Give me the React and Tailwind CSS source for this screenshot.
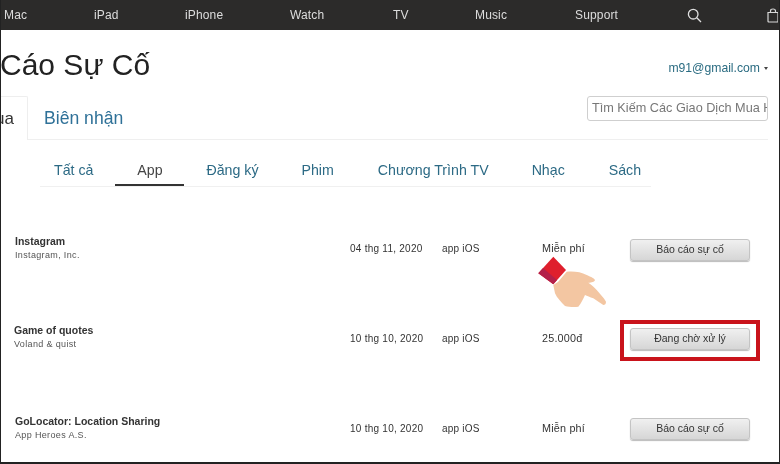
const font = { fontFamily: '"Liberation Sans", Arial, sans-serif' };

const navItems = [
  { label: "Mac", cls: "ml-[3px] w-[90px]" },
  { label: "iPad", cls: "w-[91px]" },
  { label: "iPhone", cls: "w-[105px]" },
  { label: "Watch", cls: "w-[103px]" },
  { label: "TV", cls: "w-[82px]" },
  { label: "Music", cls: "w-[100px]" },
  { label: "Support", cls: "w-[113px]" },
];

const subTabs = [
  { label: "Tất cả", cls: "pl-[14px] pr-[22px] text-[#2c6a85]" },
  { label: "App", cls: "w-[69px] text-center text-[#444] border-b-2 border-[#333]" },
  { label: "Đăng ký", cls: "pl-[22px] pr-[21px] text-[#2c6a85]" },
  { label: "Phim", cls: "px-[22px] text-[#2c6a85]" },
  { label: "Chương Trình TV", cls: "pl-[22px] pr-[21px] text-[#2c6a85]" },
  { label: "Nhạc", cls: "px-[22px] text-[#2c6a85]" },
  { label: "Sách", cls: "pl-[22px] text-[#2c6a85]" },
];

const rows = [
  { name: "Instagram", dev: "Instagram, Inc.", date: "04 thg 11, 2020", price: "Miễn phí", action: "Báo cáo sự cố", nameCls: "pl-[14px]", btnCls: "mt-[3px]" },
  { name: "Game of quotes", dev: "Voland & quist", date: "10 thg 10, 2020", price: "25.000đ", action: "Đang chờ xử lý", marked: true, nameCls: "pl-[13px] -mt-[3px]", btnCls: "mt-[1px]" },
  { name: "GoLocator: Location Sharing", dev: "App Heroes A.S.", date: "10 thg 10, 2020", price: "Miễn phí", action: "Báo cáo sự cố", nameCls: "pl-[14px]", btnCls: "mt-[1px]" },
];

const Hand = () => (
  <svg className="absolute left-[537px] top-[256px]" width="70" height="52" viewBox="0 0 70 52">
    <path d="M20 26 L28.7 15.7 C36 15 43 16 48.7 19 C52 20.5 56 22 57 24 C56.5 26 53 26.8 50.3 26.7 C54 29 56 31 58.7 34 C62 38 66 42 68 45.7 C68 48 67 49 65.3 49 C62 47 58 44 55.3 42.3 C52 41 49 40 47 39 C45 43 43 48 40.3 50.7 C36 51.5 31 51 27 50 C23 46 19 42 17 37.3 L15.3 29 Z" fill="#f3c6a2" />
    <path d="M0.3 17.3 L15.3 0.7 L28 14 L15.3 28.3 Z" fill="#df1f2d" />
    <path d="M0.3 17.3 L15.3 28.3 L19 24 L5 12 Z" fill="#b3204a" />
  </svg>
);

const App = () => {
  return (
    <div style={font} className="relative w-[780px] h-[464px] overflow-hidden bg-white border-l border-b-2 border-r border-[#222] blur-[0.4px]">
      <nav className="h-[30px] bg-[#2c2b2a] flex items-center text-[12px] text-[#dddddd] tracking-[0.15px]">
        {navItems.map((item) => (
          <span key={item.label} className={item.cls}>{item.label}</span>
        ))}
        <svg width="15" height="15" viewBox="0 0 15 15" fill="none" stroke="#e0e0e0" strokeWidth="1.3" className="-ml-[1px]">
          <circle cx="6.2" cy="6.2" r="4.8" />
          <path d="M9.8 9.8 L14 14" />
        </svg>
        <svg width="11" height="15" viewBox="0 0 11 15" fill="none" stroke="#d8d8d8" strokeWidth="1.2" className="ml-[65px] shrink-0">
          <path d="M1 4.5 H11 V14 H2 Q1 14 1 13 Z" />
          <path d="M3.5 4.5 V3 Q3.5 1 6 1 Q8.5 1 8.5 3 V4.5" />
        </svg>
      </nav>

      <div className="h-[66px] flex justify-between items-start">
        <h1 className="text-[30px] leading-[36px] mt-[17px] -ml-px text-[#222] whitespace-nowrap">Cáo Sự Cố</h1>
        <div className="mt-[31px] mr-[11px] flex items-center gap-[4px] text-[12.2px] leading-[14px] text-[#2b6c82]">
          m91@gmail.com
          <span className="w-0 h-0 border-l-[2.5px] border-r-[2.5px] border-t-[3px] border-l-transparent border-r-transparent border-t-[#444]" />
        </div>
      </div>

      <div className="h-[44px] flex items-start border-b border-[#efefef] mr-[11px]">
        <div className="w-[27px] h-[44px] overflow-hidden bg-white border-t border-r border-[#eeeeee] rounded-tr-[2px] shrink-0 flex items-center justify-end pr-[13px]">
          <span className="text-[17px] text-[#333]">ua</span>
        </div>
        <span className="ml-[16px] mt-[10px] text-[17.6px] leading-[24px] text-[#2f7198]">Biên nhận</span>
        <div className="ml-auto w-[181px] h-[25px] overflow-hidden border border-[#cfcfcf] rounded-[3px] px-[4px] text-[12.7px] leading-[23px] text-[#777] whitespace-nowrap">
          Tìm Kiếm Các Giao Dịch Mua Hàng
        </div>
      </div>

      <div className="h-[47px] ml-[39px] w-[611px] flex items-end border-b border-[#f0f0f0] text-[14.2px]">
        {subTabs.map((tab) => (
          <span key={tab.label} className={`h-[46px] shrink-0 leading-[60px] whitespace-nowrap ${tab.cls}`}>{tab.label}</span>
        ))}
      </div>

      <div className="pt-[16px]">
        {rows.map((row) => (
          <div key={row.name} className="h-[90px] flex items-center text-[10px] text-[#333]">
            <div className="w-[349px]">
              <div className={row.nameCls}>
                <div className="font-bold text-[10.5px] leading-[14px] text-[#333]">{row.name}</div>
                <div className="text-[9px] leading-[14px] tracking-[0.35px] text-[#555]">{row.dev}</div>
              </div>
            </div>
            <div className="w-[92px] tracking-[0.25px]">{row.date}</div>
            <div className="w-[100px] tracking-[0.2px]">app iOS</div>
            <div className="w-[88px] text-[10.8px] tracking-[0.2px]">{row.price}</div>
            <div className={`relative ${row.btnCls}`}>
              <button className="block w-[120px] h-[22px] rounded-[3px] border border-[#c4c4c4] bg-gradient-to-b from-[#f0f0f0] to-[#d6d6d6] shadow-[0_1px_1px_#bbb] text-[10.5px] text-[#333]">
                {row.action}
              </button>
              {row.marked && (
                <div className="absolute -left-[10px] -top-[8px] w-[140px] h-[41px] border-[4px] border-[#c9131b]" />
              )}
            </div>
          </div>
        ))}
      </div>

      <Hand />
    </div>
  );
};

export default App;
